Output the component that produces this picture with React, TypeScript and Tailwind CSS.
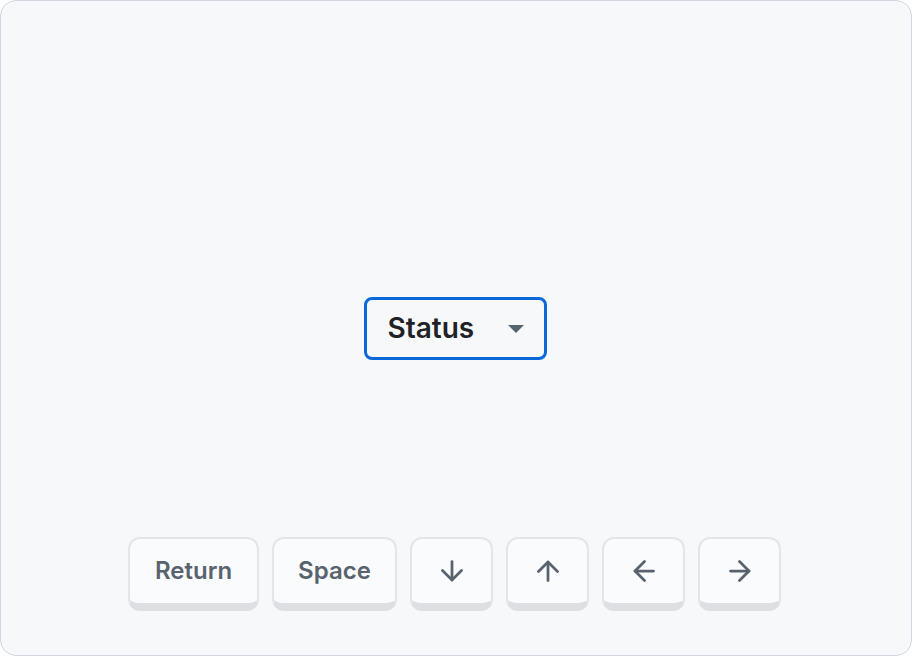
import React from "react";

const font = { fontFamily: "Inter, 'Noto Sans', 'Liberation Sans', sans-serif" };

function Arrow({ dir }: { dir: "up" | "down" | "left" | "right" }) {
  const rot = { up: 0, right: 90, down: 180, left: 270 }[dir];
  return (
    <svg width="22" height="22" viewBox="0 0 22 22" fill="none" stroke="#59636e" strokeWidth="2.75" strokeLinecap="round" strokeLinejoin="round" style={{ transform: `rotate(${rot}deg)` }}>
      <path d="M11 2v18.5" />
      <path d="M1.5 11.5 11 2l9.5 9.5" />
    </svg>
  );
}

function Key({ children, wide }: { children: React.ReactNode; wide?: string }) {
  return (
    <div className={`flex h-[74px] items-center justify-center rounded-xl border-2 border-b-[8px] border-[#e3e5e9] border-b-[#dedfe3] bg-[#fafbfc] ${wide ?? "w-[83px]"}`}>
      {children}
    </div>
  );
}

export default function App() {
  return (
    <div className="h-[656px] w-[912px]" style={font}>
      <div className="flex h-full flex-col rounded-2xl border border-[#d0d7de] bg-[#f6f8fa]">
        <div className="flex-1" />
        <div className="flex justify-center">
          <button className="mr-[2px] flex h-[63px] w-[183px] items-center justify-between rounded-lg border-[3px] border-[#0969da] bg-[#f6f8fa] pl-[21px] pr-[20px]">
            <span className="text-[28px] font-semibold leading-none text-[#1f2328]">Status</span>
            <svg width="16" height="8" viewBox="0 0 16 8" className="mt-[2px]">
              <path d="M0 0h16L8 8z" fill="#59636e" />
            </svg>
          </button>
        </div>
        <div className="flex flex-1 items-end justify-center">
          <div className="mb-[44px] mr-[3px] flex gap-[13px] text-[24px] font-semibold text-[#59636e]">
            <Key wide="w-[131px]">Return</Key>
            <Key wide="w-[125px]">Space</Key>
            <Key><Arrow dir="down" /></Key>
            <Key><Arrow dir="up" /></Key>
            <Key><Arrow dir="left" /></Key>
            <Key><Arrow dir="right" /></Key>
          </div>
        </div>
      </div>
    </div>
  );
}
